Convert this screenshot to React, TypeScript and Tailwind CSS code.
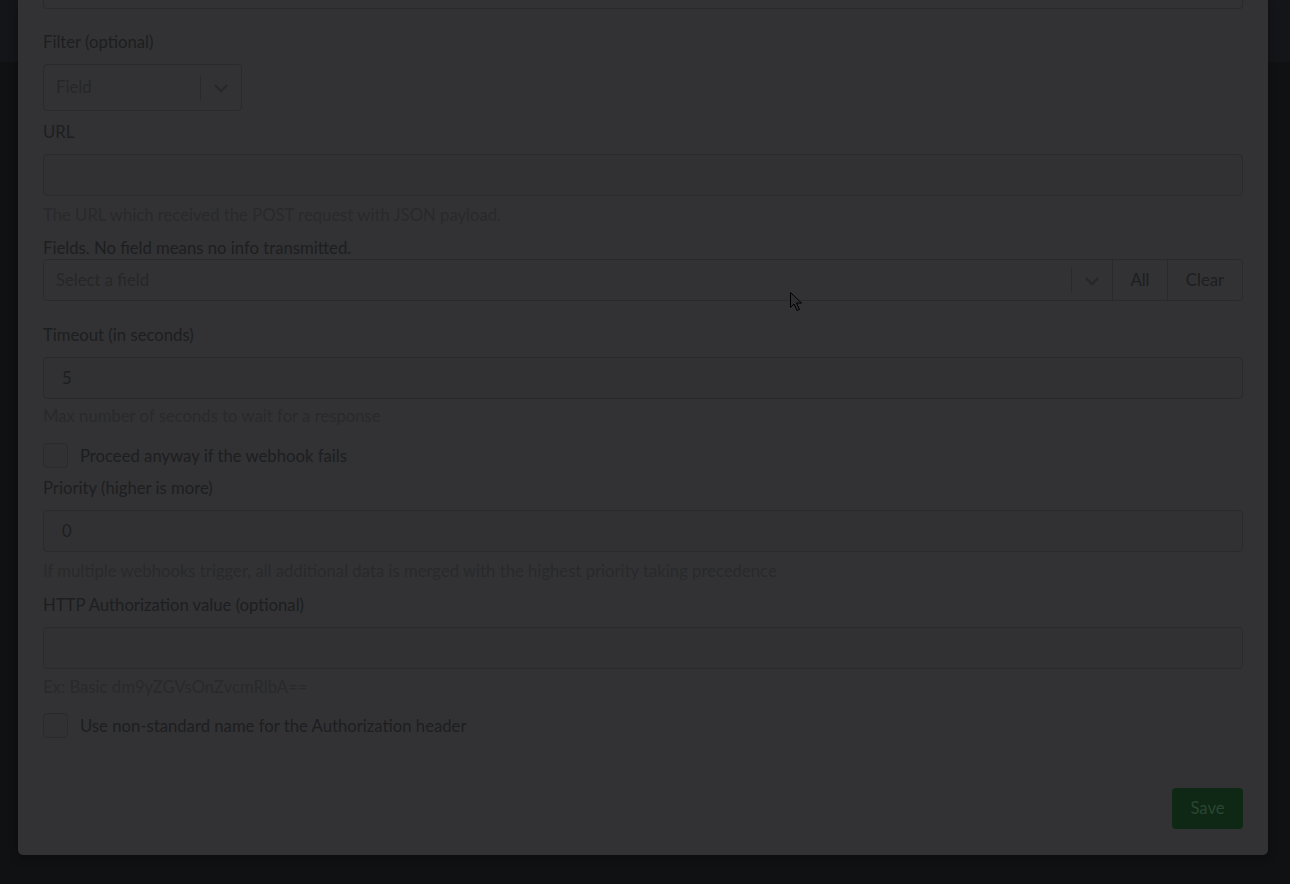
import React from "react";

const font = { fontFamily: "Lato, 'Noto Sans', sans-serif" };

function Chevron() {
  return (
    <svg width="18" height="18" viewBox="0 0 20 20" className="text-[#27272a]">
      <path
        d="M4 7.5 L10 13.5 L16 7.5"
        fill="none"
        stroke="currentColor"
        strokeWidth="2.4"
        strokeLinecap="round"
        strokeLinejoin="round"
      />
    </svg>
  );
}

function Label({ children, className = "" }: { children: React.ReactNode; className?: string }) {
  return <div className={"h-6 leading-6 text-[16.7px] text-[#1d1e20] " + className}>{children}</div>;
}

function Help({ children, className = "" }: { children: React.ReactNode; className?: string }) {
  return <div className={"h-6 leading-6 text-[16.7px] text-[#29292b] " + className}>{children}</div>;
}

function Input({ value, className = "" }: { value?: string; className?: string }) {
  return (
    <div
      className={
        "h-[42px] w-full rounded-[4px] border border-[#2a2a2c] bg-[#313133] px-[18px] pt-[1px] flex items-center text-[16.7px] text-[#1d1e20] " +
        className
      }
    >
      {value}
    </div>
  );
}

function Checkbox({ label, className = "" }: { label: string; className?: string }) {
  return (
    <div className={"flex items-center h-[25px] " + className}>
      <div className="w-[25px] h-[25px] rounded-[4px] border border-[#2a2a2c] bg-[#313133]" />
      <span className="ml-[12px] text-[16.7px] leading-6 text-[#1d1e20]">{label}</span>
    </div>
  );
}

export default function App() {
  return (
    <div className="relative w-full h-[884px] overflow-hidden bg-[#101113]" style={font}>
      <div className="h-[62px] w-full bg-[#141518]" />
      <div className="absolute left-[18px] right-[22px] top-0 h-[855px] rounded-b-[5px] bg-[#323234] px-[25px] shadow-[0_2px_8px_rgba(0,0,0,0.35)]">
        <div className="h-[9px] w-full rounded-b-[4px] border-x border-b border-[#2a2a2c]" />

        <Label className="mt-[21px]">Filter (optional)</Label>
        <div className="mt-[10px] h-[47px] w-[199px] rounded-[4px] border border-[#2a2a2c] flex items-center">
          <span className="flex-1 pl-[12px] text-[16.7px] text-[#262628]">Field</span>
          <div className="w-px h-[25px] bg-[#2a2a2c]" />
          <div className="w-[40px] flex justify-center">
            <Chevron />
          </div>
        </div>

        <Label className="mt-[9px]">URL</Label>
        <Input className="mt-[10px]" />
        <Help className="mt-[7px]">The URL which received the POST request with JSON payload.</Help>

        <Label className="mt-[9px]">Fields. No field means no info transmitted.</Label>
        <div className="mt-[-1px] h-[42px] w-full flex rounded-[4px] border border-[#2a2a2c]">
          <div className="flex-1 flex items-center border-r border-[#2a2a2c] pt-[1px]">
            <span className="flex-1 pl-[12px] text-[16.7px] text-[#262628]">Select a field</span>
            <div className="w-px h-[25px] bg-[#2a2a2c]" />
            <div className="w-[40px] flex justify-center">
              <Chevron />
            </div>
          </div>
          <div className="w-[55px] flex items-center justify-center border-r border-[#2a2a2c] pt-[1px] text-[16.7px] text-[#1d1e20]">
            All
          </div>
          <div className="w-[74px] flex items-center justify-center pt-[1px] text-[16.7px] text-[#1d1e20]">Clear</div>
        </div>

        <Label className="mt-[22px]">Timeout (in seconds)</Label>
        <Input className="mt-[10px]" value="5" />
        <Help className="mt-[5px]">Max number of seconds to wait for a response</Help>

        <Checkbox className="mt-[15px]" label="Proceed anyway if the webhook fails" />

        <Label className="mt-[8px]">Priority (higher is more)</Label>
        <Input className="mt-[10px]" value="0" />
        <Help className="mt-[7px]">
          If multiple webhooks trigger, all additional data is merged with the highest priority taking precedence
        </Help>

        <Label className="mt-[10px]">HTTP Authorization value (optional)</Label>
        <Input className="mt-[10px]" />
        <Help className="mt-[6px]">Ex: Basic dm9yZGVsOnZvcmRlbA==</Help>

        <Checkbox className="mt-[14px]" label="Use non-standard name for the Authorization header" />

        <div className="mt-[50px] flex justify-end">
          <div className="h-[41px] w-[71px] rounded-[4px] bg-[#0e2815] pt-[1px] flex items-center justify-center text-[16.7px] text-[#2b4532]">
            Save
          </div>
        </div>
      </div>

      <svg
        className="absolute left-[789px] top-[291px]"
        width="16"
        height="22"
        viewBox="0 0 16 22"
      >
        <path
          d="M1.5 1.5 L1.5 16.5 L5 13 L8 19.5 L10.5 18.5 L7.5 12 L12.5 12 Z"
          fill="#2f2f31"
          stroke="#000"
          strokeWidth="1"
          strokeLinejoin="miter"
        />
      </svg>
    </div>
  );
}
